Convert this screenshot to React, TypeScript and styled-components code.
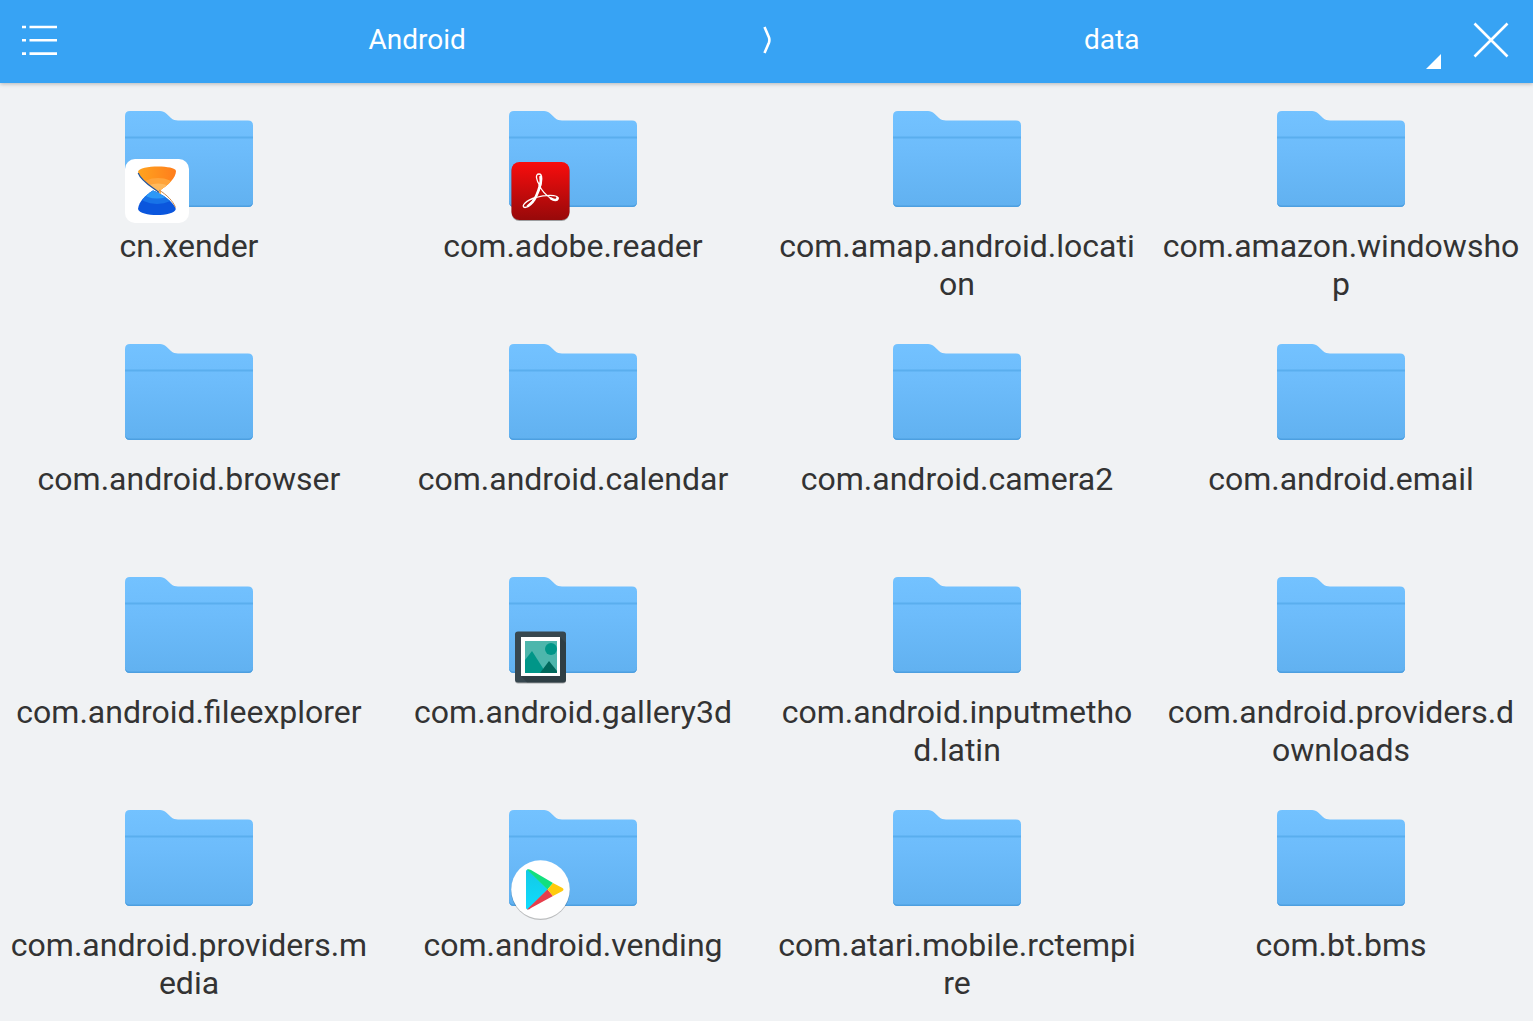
import React from "react";
import styled, { createGlobalStyle } from "styled-components";

const GlobalStyle = createGlobalStyle`
  * {
    box-sizing: border-box;
  }
  body {
    margin: 0;
    background: #f0f2f4;
    color: #333;
    font-family: Roboto, "Noto Sans", sans-serif;
  }
`;

const Page = styled.div`
  min-height: 100vh;
`;

const TopBar = styled.header`
  display: flex;
  height: 83px;
  background: #37a3f4;
  box-shadow: 0 1px 4px rgba(0, 0, 0, 0.25);
`;

const BarButton = styled.button<{ $width: number }>`
  flex: 0 0 ${(p) => p.$width}px;
  display: flex;
  align-items: center;
  justify-content: center;
  padding: 0 0 4px;
  border: 0;
  background: none;
  color: #fff;
  cursor: pointer;
`;

const Trail = styled.nav`
  flex: 1;
  display: flex;
  min-width: 0;
`;

const Crumb = styled.button`
  position: relative;
  flex: 1 1 0;
  min-width: 0;
  padding: 0 0 4px;
  border: 0;
  background: none;
  color: #fff;
  font: 400 28px/32px Roboto, "Noto Sans", sans-serif;
  cursor: pointer;
`;

const Separator = styled.span`
  flex: 0 0 20px;
  display: flex;
  align-items: center;
  justify-content: flex-end;
  padding: 0 4px 4px 0;
`;

const Corner = styled.svg`
  position: absolute;
  right: 8px;
  bottom: 14px;
`;

const Grid = styled.ul`
  display: grid;
  grid-template-columns: repeat(4, minmax(0, 1fr));
  grid-auto-rows: minmax(233px, auto);
  column-gap: 6px;
  margin: 0;
  padding: 0 3px 0 0;
  list-style: none;
`;

const Tile = styled.a`
  display: flex;
  flex-direction: column;
  align-items: center;
  gap: 20px;
  padding: 28px 8px 0;
  color: inherit;
  text-decoration: none;
`;

const FolderFrame = styled.span`
  position: relative;
  display: block;
  width: 128px;
  height: 96px;

  > svg {
    display: block;
  }
`;

const Badge = styled.span`
  position: absolute;
  left: 0;
  bottom: -16px;
  width: 64px;
  height: 64px;

  > svg {
    display: block;
    overflow: visible;
  }
`;

const Name = styled.span`
  font-size: 32px;
  line-height: 38px;
  text-align: center;
  word-break: break-all;
`;

const FolderShape = () => (
  <svg width="128" height="96" viewBox="0 0 128 96" aria-hidden="true">
    <defs>
      <linearGradient id="folder" x1="0" y1="0" x2="0" y2="1">
        <stop offset="0" stopColor="#73c2ff" />
        <stop offset="0.4" stopColor="#6dbcfb" />
        <stop offset="1" stopColor="#61b1f0" />
      </linearGradient>
      <clipPath id="folderClip">
        <path d="M5 0H35C37.500 0 39.500 1 41.500 2.800L46 7C48 8.800 50.500 9.500 53 9.500H123Q128 9.500 128 14.500V91Q128 96 123 96H5Q0 96 0 91V5Q0 0 5 0Z" />
      </clipPath>
    </defs>
    <g clipPath="url(#folderClip)">
      <rect width="128" height="96" fill="url(#folder)" />
      <rect y="25.500" width="128" height="2" fill="#5aaeee" />
      <path d="M0 89.500Q0 94.500 5 94.500H123Q128 94.500 128 89.500V96H0Z" fill="#4d9fe0" />
    </g>
  </svg>
);

const XenderMark = () => (
  <svg width="64" height="64" viewBox="0 0 64 64">
    <defs>
      <linearGradient id="xTop" x1="0" y1="0" x2="1" y2="0">
        <stop offset="0" stopColor="#ffa51f" />
        <stop offset="1" stopColor="#ff7c1c" />
      </linearGradient>
      <clipPath id="xUpper">
        <path d="M13 13C14 6 50 6 51 12C51 19 43 26 35.500 31L36 35C28 29 15 20 13 13Z" />
      </clipPath>
      <clipPath id="xLower">
        <path d="M13 50C14 42 21 36 28 31.500C37 35 49 43 50.800 50C49 58 15 58 13 50Z" />
      </clipPath>
    </defs>
    <rect width="64" height="64" rx="10" fill="#fff" />
    <g clipPath="url(#xLower)">
      <rect x="12" y="30" width="40" height="28" fill="#0b56dd" />
      <ellipse cx="32" cy="36" rx="18" ry="9" fill="#1873e8" />
      <ellipse cx="32" cy="34" rx="13" ry="5.500" fill="#2c98f6" />
    </g>
    <g clipPath="url(#xUpper)">
      <rect x="12" y="6" width="40" height="30" fill="url(#xTop)" />
      <ellipse cx="33" cy="27" rx="16" ry="8" fill="#ffa43a" />
      <ellipse cx="33" cy="30" rx="12" ry="5.500" fill="#ffb95c" />
    </g>
    <path d="M13.200 14C16 22 27 28 34 33.500" fill="none" stroke="#24559b" strokeWidth="1.200" />
    <path d="M34 31C42 36 48 42 50.500 48.500" fill="none" stroke="#c98a52" strokeWidth="1" />
  </svg>
);

const ReaderMark = () => (
  <svg width="64" height="64" viewBox="0 0 64 64">
    <defs>
      <linearGradient id="reader" x1="0" y1="0" x2="0" y2="1">
        <stop offset="0" stopColor="#f90d0d" />
        <stop offset="1" stopColor="#97090a" />
      </linearGradient>
    </defs>
    <rect x="2.500" y="4" width="58" height="58" rx="8" fill="#000" opacity="0.35" />
    <rect x="2.500" y="3" width="58" height="58" rx="8" fill="url(#reader)" />
    <g fill="none" stroke="#fff" strokeLinecap="round" strokeLinejoin="round">
      <path strokeWidth="1.300" d="M31 27C27 21 26 15 30 15C34 15 33 23 31 29C27 39 20 48.500 16 48.500C11 48 17 41 27 38.500C35 36 49 35 49 39.500C48 44 36 38 30 26" />
      <path strokeWidth="2.600" d="M31.500 18C33 24 29 33 27 37.500C25 42 22 45 19 47M42 39.500C45 41.500 48.500 41.500 48.500 39" />
    </g>
  </svg>
);

const GalleryMark = () => (
  <svg width="64" height="64" viewBox="0 0 64 64">
    <rect x="6" y="7.500" width="51" height="51" rx="3" fill="#000" opacity="0.3" />
    <rect x="6" y="6.500" width="51" height="51" rx="3" fill="#37474f" />
    <path d="M51 12L57 18V55Q57 57.500 54 57.500H18L12 51Z" fill="#263238" opacity="0.45" />
    <rect x="12" y="12" width="39" height="39" fill="#fff" />
    <rect x="16" y="16" width="32" height="32" fill="#4db6ac" />
    <circle cx="42" cy="24" r="6" fill="#009688" />
    <path d="M16 35L23 26L37 48H16Z" fill="#009688" />
    <path d="M31 48L40 36L48 46V48Z" fill="#00695c" />
  </svg>
);

const PlayMark = () => (
  <svg width="64" height="64" viewBox="0 0 64 64">
    <defs>
      <linearGradient id="playBlue" x1="0" y1="0" x2="0" y2="1">
        <stop offset="0" stopColor="#13c9e4" />
        <stop offset="1" stopColor="#0fdcff" />
      </linearGradient>
    </defs>
    <circle cx="31.500" cy="32.500" r="29.500" fill="#000" opacity="0.22" />
    <circle cx="31.500" cy="31.500" r="29.300" fill="#fff" />
    <path d="M17 13Q17 11.500 19 11.500L39 31.500L19 51.500Q17 51 17 50Z" fill="url(#playBlue)" />
    <path d="M18 11.500Q20 11 22 12L44 25L38.500 31.500Z" fill="#12df7e" />
    <path d="M18 51.500Q20 52 22 50L44 38L38.500 31.500Z" fill="#e73f4c" />
    <path d="M44 25L53.500 30Q55.500 31.500 53.500 33L44 38L38.500 31.500Z" fill="#ffca0c" />
  </svg>
);

type Folder = { name: string; mark?: () => React.ReactElement };

const folders: Folder[] = [
  { name: "cn.xender", mark: XenderMark },
  { name: "com.adobe.reader", mark: ReaderMark },
  { name: "com.amap.android.location" },
  { name: "com.amazon.windowshop" },
  { name: "com.android.browser" },
  { name: "com.android.calendar" },
  { name: "com.android.camera2" },
  { name: "com.android.email" },
  { name: "com.android.fileexplorer" },
  { name: "com.android.gallery3d", mark: GalleryMark },
  { name: "com.android.inputmethod.latin" },
  { name: "com.android.providers.downloads" },
  { name: "com.android.providers.media" },
  { name: "com.android.vending", mark: PlayMark },
  { name: "com.atari.mobile.rctempire" },
  { name: "com.bt.bms" },
];

export default function App() {
  return (
    <Page>
      <GlobalStyle />
      <TopBar>
        <BarButton type="button" $width={80} aria-label="Menu">
          <svg width="36" height="32" viewBox="0 0 36 32" stroke="#fff" strokeWidth="2.600">
            <path d="M0 3H4M7.500 3H35M0 16.300H4M7.500 16.300H35M0 29.600H4M7.500 29.600H35" />
          </svg>
        </BarButton>
        <Trail aria-label="Path">
          <Crumb type="button">Android</Crumb>
          <Separator aria-hidden="true">
            <svg width="8" height="28" viewBox="0 0 8 28" fill="none" stroke="#fff" strokeWidth="2.600">
              <path d="M1.500 1L6 11.500Q6.800 14 6 16.500L1.500 27" />
            </svg>
          </Separator>
          <Crumb type="button" aria-haspopup="menu">
            data
            <Corner width="15" height="15" viewBox="0 0 15 15" aria-hidden="true">
              <path d="M15 0V15H0Z" fill="#fff" />
            </Corner>
          </Crumb>
        </Trail>
        <BarButton type="button" $width={84} aria-label="Close">
          <svg width="36" height="36" viewBox="0 0 36 36" stroke="#fff" strokeWidth="2.600">
            <path d="M1.500 1.500L34.500 34.500M34.500 1.500L1.500 34.500" />
          </svg>
        </BarButton>
      </TopBar>
      <main>
        <Grid>
          {folders.map(({ name, mark: Mark }) => (
            <li key={name}>
              <Tile href={`#${name}`}>
                <FolderFrame>
                  <FolderShape />
                  {Mark && (
                    <Badge aria-hidden="true">
                      <Mark />
                    </Badge>
                  )}
                </FolderFrame>
                <Name>{name}</Name>
              </Tile>
            </li>
          ))}
        </Grid>
      </main>
    </Page>
  );
}
